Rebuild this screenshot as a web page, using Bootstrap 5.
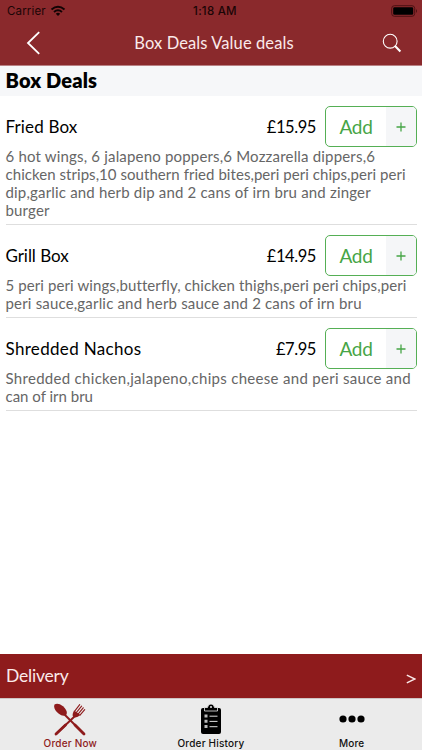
<!DOCTYPE html>
<html lang="en">
<head>
<meta charset="utf-8">
<meta name="viewport" content="width=device-width, initial-scale=1">
<title>Box Deals Value deals</title>
<link href="https://cdn.jsdelivr.net/npm/bootstrap@5.3.0/dist/css/bootstrap.min.css" rel="stylesheet">
<style>
body{height:750px;font-family:Lato,sans-serif;color:#000;overflow:hidden}
svg{display:block;flex:none}
.top{height:66px;background:#8a292c;border-bottom:1px solid #b98184}
.status{height:21px;font:500 11.5px/21px Inter,sans-serif;color:#1a0506;padding:1px 3px 0 7px}
.status>div{width:33.333%}
.status .carrier{letter-spacing:.15px;font-weight:400}
.status .clock{font-weight:500;letter-spacing:.25px;padding-left:4px}
.titlebar{height:44px;padding:0 20px 0 26px}
.titlebar h1{font-size:16.5px;line-height:20px;letter-spacing:.1px;color:#fbeaea;padding-left:4px}
.section{height:30px;background:#f6f7f9;padding-left:5.5px}
.section h2{font-size:20px;line-height:28px;font-weight:800;letter-spacing:.15px}
.dish{padding:10px 0 5px;margin:0 5px 0 6px;border-bottom:1px solid #dedede}
.dish-head{height:41px}
.dish-name,.price{font-size:17px;line-height:24px;letter-spacing:.15px;margin-left:-.5px}
.price{margin-right:9px;font-size:16.5px;letter-spacing:-.42px}
.ls-grill{letter-spacing:-.05px}
.ls-nachos{letter-spacing:.32px}
.add{width:92px;height:41px;border:1px solid #55af55;border-radius:5px;background:#fff;color:#46a546;overflow:hidden}
.add .label{width:60px;font:400 19px/40px Lato,sans-serif;letter-spacing:-.35px}
.add .plus{background:#f5f6f8}
.desc{font-size:15px;line-height:18px;color:#666;white-space:nowrap;margin-left:-.5px}
.desc span{display:block}
.t1{letter-spacing:.18px}
.t2{letter-spacing:.05px}
.t3{letter-spacing:.1px}
.t4{letter-spacing:.3px}
.t5{letter-spacing:0}
.delivery{height:44px;background:#8e1b1c;color:#fbeaea;padding:1px 6px 0 6px;font-size:17.5px;letter-spacing:-.2px}
.tabs{height:52px;background:#ebebeb;border-top:1px solid #cfc4c4;font:500 10px/12px Inter,sans-serif;padding-bottom:1px}
.tabs a{color:#111;text-decoration:none;width:140.67px;letter-spacing:.2px}
.tabs a.on{color:#8e1b1c}
.dots{margin-bottom:14px}
</style>
</head>
<body class="d-flex flex-column bg-white m-0">
<header class="top flex-shrink-0">
  <div class="status d-flex align-items-center">
    <div class="carrier d-flex align-items-center gap-1"><span>Carrier</span>
      <svg width="16" height="12" viewBox="0 0 16 12" fill="none" stroke="#120304" stroke-width="2"><path d="M1.5 4.5Q8-1 14.5 4.5M4 7Q8 3.6 12 7"/><path d="M5.8 8.700Q8 7 10.200 8.700L8 11z" fill="#120304" stroke="none"/></svg>
    </div>
    <div class="clock text-center">1:18 AM</div>
    <div class="d-flex justify-content-end"><svg width="28" height="12" viewBox="0 0 28 12"><rect x=".7" y=".7" width="23" height="10.6" rx="2.7" fill="none" stroke="#4d1113"/><rect x="2.2" y="2.2" width="20" height="7.6" rx="1.3" fill="#000"/><path d="M25 4q2 2 0 4z" fill="#4d1113"/></svg></div>
  </div>
  <nav class="titlebar d-flex align-items-center justify-content-between">
    <svg width="16" height="24" viewBox="0 0 16 24" fill="none" stroke="#fff" stroke-width="1.8"><path d="M13.2 1.2L2 12l11.2 10.8"/></svg>
    <h1 class="m-0 fw-normal">Box Deals Value deals</h1>
    <svg width="20" height="20" viewBox="0 0 20 20" fill="none" stroke="#fff"><circle cx="8.2" cy="8.2" r="6.9" stroke-width="1.1"/><path d="M12.8 12.8l5.6 5.6" stroke-width="2.1"/></svg>
  </nav>
</header>
<div class="section flex-shrink-0"><h2 class="m-0">Box Deals</h2></div>
<main class="flex-grow-1">
  <article class="dish">
    <div class="dish-head d-flex align-items-center"><span class="dish-name">Fried Box</span><span class="price ms-auto">£15.95</span>
      <button class="add d-flex p-0"><span class="label">Add</span><span class="plus flex-grow-1 align-self-stretch d-flex align-items-center justify-content-center"><svg width="10" height="10" viewBox="0 0 10 10" stroke="#46a546" stroke-width="1.3"><path d="M5 .5v9M.5 5h9"/></svg></span></button></div>
    <div class="desc"><span class="t1">6 hot wings, 6 jalapeno poppers,6 Mozzarella dippers,6</span><span class="t2">chicken strips,10 southern fried bites,peri peri chips,peri peri</span><span class="t1">dip,garlic and herb dip and 2 cans of irn bru and zinger</span><span class="t1">burger</span></div>
  </article>
  <article class="dish">
    <div class="dish-head d-flex align-items-center"><span class="dish-name ls-grill">Grill Box</span><span class="price ms-auto">£14.95</span>
      <button class="add d-flex p-0"><span class="label">Add</span><span class="plus flex-grow-1 align-self-stretch d-flex align-items-center justify-content-center"><svg width="10" height="10" viewBox="0 0 10 10" stroke="#46a546" stroke-width="1.3"><path d="M5 .5v9M.5 5h9"/></svg></span></button></div>
    <div class="desc"><span class="t3">5 peri peri wings,butterfly, chicken thighs,peri peri chips,peri</span><span class="t1">peri sauce,garlic and herb sauce and 2 cans of irn bru</span></div>
  </article>
  <article class="dish">
    <div class="dish-head d-flex align-items-center"><span class="dish-name ls-nachos">Shredded Nachos</span><span class="price ms-auto">£7.95</span>
      <button class="add d-flex p-0"><span class="label">Add</span><span class="plus flex-grow-1 align-self-stretch d-flex align-items-center justify-content-center"><svg width="10" height="10" viewBox="0 0 10 10" stroke="#46a546" stroke-width="1.3"><path d="M5 .5v9M.5 5h9"/></svg></span></button></div>
    <div class="desc"><span class="t4">Shredded chicken,jalapeno,chips cheese and peri sauce and</span><span class="t5">can of irn bru</span></div>
  </article>
</main>
<div class="delivery d-flex align-items-center justify-content-between flex-shrink-0"><span>Delivery</span>
  <svg class="mt-1" width="10" height="10" viewBox="0 0 10 10" fill="none" stroke="#fbeaea" stroke-width="1.4"><path d="M.8 1.2L9 5 .8 8.8"/></svg></div>
<nav class="tabs d-flex flex-shrink-0">
  <a href="#" class="on d-flex flex-column align-items-center justify-content-between pt-1">
    <svg width="34" height="34" viewBox="0 0 34 34" fill="none" stroke="#8e1b1c" stroke-linecap="round"><path d="M12 12L31 31" stroke-width="1.9"/><path d="M21.500 13.500L3 31" stroke-width="1.9"/><path d="M12.500 22L3 31M22 22l9 9" stroke-width="2.800"/><path d="M1.500 1.500Q5-.4 10 3.200Q15 8 13.500 11.500Q10.500 14.500 5.500 10.500Q0 6 1.500 1.500z" fill="#8e1b1c" stroke="none"/><path d="M21 7.500Q18.500 12.500 20.500 14Q23.500 15.500 27.500 12z" fill="#8e1b1c" stroke="none"/><path d="M21.500 8.300l5.200-6.600M23.500 9.400l5.100-6.300M25.300 10.800l4.900-6M27 12.200l4.700-5.600" stroke-width="1.100"/></svg>
    <span>Order Now</span></a>
  <a href="#" class="d-flex flex-column align-items-center justify-content-between">
    <svg class="mt-1" width="20" height="32" viewBox="0 0 20 32"><rect y="5" width="20" height="26" rx="2" fill="#000"/><path d="M3.500 4.500h3Q7 1 10 1t3.500 3.500h3V8h-13z" fill="#000" stroke="#ebebeb" stroke-width=".8"/><circle cx="10" cy="3.900" r="1" fill="#ebebeb"/><path d="M3.500 11.500h3v3h-3zM3.500 16.700h3v3h-3zM3.500 22h3v3h-3z" fill="#bbb"/><path d="M8.500 13.200h8M8.500 18.400h8M8.500 23.700h8" stroke="#ddd" stroke-width="1"/></svg>
    <span>Order History</span></a>
  <a href="#" class="d-flex flex-column align-items-center justify-content-end">
    <svg class="dots" width="26" height="8" viewBox="0 0 26 8"><circle cx="4" cy="4" r="3.600"/><circle cx="13" cy="4" r="3.600"/><circle cx="22" cy="4" r="3.600"/></svg>
    <span>More</span></a>
</nav>
<script src="https://cdn.jsdelivr.net/npm/bootstrap@5.3.0/dist/js/bootstrap.bundle.min.js"></script>
</body>
</html>
